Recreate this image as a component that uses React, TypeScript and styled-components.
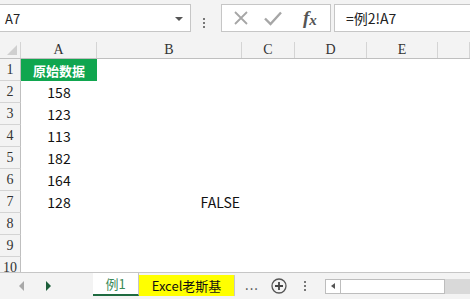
import React, { FC } from "react";
import styled, { createGlobalStyle } from "styled-components";

const GlobalStyle = createGlobalStyle`
  html, body {
    margin: 0;
    padding: 0;
    background: #ffffff;
  }
  * {
    box-sizing: border-box;
  }
`;

const COLS = [21, 76, 145, 53, 72, 71];
const LETTERS = ["A", "B", "C", "D", "E"];

type RowData = { a?: string; b?: string; head?: boolean };

const ROWS: RowData[] = [
  { a: "原始数据", head: true },
  { a: "158" },
  { a: "123" },
  { a: "113" },
  { a: "182" },
  { a: "164" },
  { a: "128", b: "FALSE" },
  {},
  {},
  {},
];

const App: FC = () => {
  return (
    <Page>
      <GlobalStyle />
      <FormulaBar>
        <NameBox>
          <NameText>A7</NameText>
          <Caret />
        </NameBox>
        <DotsSlot $w={30}>
          <VDots />
        </DotsSlot>
        <FxBox>
          <FxButton>
            <svg width="16" height="16" viewBox="0 0 16 16">
              <path d="M2 2 L14 14 M14 2 L2 14" stroke="#a6a6a6" strokeWidth="1.8" fill="none" />
            </svg>
          </FxButton>
          <FxButton>
            <svg width="20" height="16" viewBox="0 0 20 16">
              <path d="M2 8.5 L7.5 14 L18 2.5" stroke="#a6a6a6" strokeWidth="2.4" fill="none" />
            </svg>
          </FxButton>
          <FxLabel>
            f<sub>x</sub>
          </FxLabel>
        </FxBox>
        <FormulaInput>=例2!A7</FormulaInput>
      </FormulaBar>

      <Sheet>
        <HeaderRow>
          <CornerCell>
            <CornerMark />
          </CornerCell>
          {LETTERS.map((l) => (
            <ColHead key={l}>{l}</ColHead>
          ))}
          <ColHead />
        </HeaderRow>
        {ROWS.map((r, i) => (
          <Row key={i}>
            <RowHead>{i + 1}</RowHead>
            <Cell $head={r.head}>{r.a}</Cell>
            <Cell $align="right">{r.b}</Cell>
            <Cell />
            <Cell />
            <Cell />
            <Cell />
          </Row>
        ))}
      </Sheet>

      <TabBar>
        <NavArea>
          <NavArrow $dir="left" $active={false} />
          <NavArrow $dir="right" $active />
        </NavArea>
        <SheetTab $active>例1</SheetTab>
        <SheetTab $yellow>Excel老斯基</SheetTab>
        <MoreDots>...</MoreDots>
        <AddButton>
          <svg width="16" height="16" viewBox="0 0 16 16">
            <circle cx="8" cy="8" r="7" stroke="#555" strokeWidth="1.3" fill="none" />
            <path d="M8 4 V12 M4 8 H12" stroke="#444" strokeWidth="1.8" />
          </svg>
        </AddButton>
        <DotsSlot $w={36}>
          <VDots />
        </DotsSlot>
        <ScrollBox>
          <ScrollBtn>
            <SmallArrow />
          </ScrollBtn>
        </ScrollBox>
        <ScrollTrack />
      </TabBar>
    </Page>
  );
};

export default App;

const Page = styled.div`
  width: 470px;
  height: 299px;
  display: flex;
  flex-direction: column;
  background: #f3f3f3;
  overflow: hidden;
  font-family: "Noto Sans CJK SC", "Liberation Sans", sans-serif;
`;

const FormulaBar = styled.div`
  height: 42px;
  display: flex;
  align-items: flex-start;
  padding-top: 4px;
  flex-shrink: 0;
`;

const NameBox = styled.div`
  width: 191px;
  height: 28px;
  background: #fff;
  border: 1px solid #c6c6c6;
  border-left: none;
  display: flex;
  align-items: center;
  justify-content: space-between;
  padding: 0 7px 0 5px;
`;

const NameText = styled.span`
  font-size: 13px;
  color: #222;
`;

const Caret = styled.span`
  width: 0;
  height: 0;
  border-left: 4px solid transparent;
  border-right: 4px solid transparent;
  border-top: 4px solid #555;
  margin-top: 1px;
`;

const DotsSlot = styled.div<{ $w: number }>`
  width: ${(p) => p.$w}px;
  height: 28px;
  display: flex;
  align-items: center;
  justify-content: center;
  align-self: center;
  flex-shrink: 0;
  padding-right: 4px;
`;

const VDots = styled.span`
  width: 2px;
  height: 12px;
  background: radial-gradient(circle, #777 0.9px, transparent 1.2px) 0 0 / 2px 4px repeat-y;
`;

const FxBox = styled.div`
  width: 110px;
  height: 28px;
  background: #fff;
  border: 1px solid #c6c6c6;
  display: flex;
  align-items: center;
  padding-left: 8px;
  gap: 10px;
`;

const FxButton = styled.span`
  width: 22px;
  display: flex;
  justify-content: center;
  align-items: center;
`;

const FxLabel = styled.span`
  margin-left: 9px;
  font-family: "Liberation Serif", serif;
  font-style: italic;
  font-weight: bold;
  font-size: 19px;
  color: #555;
  line-height: 1;
  sub {
    font-size: 15px;
    vertical-align: -1px;
  }
`;

const FormulaInput = styled.div`
  flex: 1;
  margin-left: 3px;
  height: 28px;
  background: #fff;
  border: 1px solid #c6c6c6;
  border-right: none;
  display: flex;
  align-items: center;
  padding-left: 11px;
  font-size: 14px;
  color: #222;
`;

const Sheet = styled.div`
  flex: 1;
  background: #fff;
  overflow: hidden;
`;

const gridCols = `${COLS.map((c) => `${c}px`).join(" ")} 1fr`;

const HeaderRow = styled.div`
  display: grid;
  grid-template-columns: ${gridCols};
  height: 17px;
  background: #f3f3f3;
  border-bottom: 1px solid #bfbfbf;
`;

const CornerCell = styled.div`
  position: relative;
  border-right: 1px solid #d4d4d4;
`;

const CornerMark = styled.span`
  position: absolute;
  right: 3px;
  bottom: 3px;
  width: 0;
  height: 0;
  border-left: 10px solid transparent;
  border-bottom: 10px solid #cfcfcf;
`;

const ColHead = styled.div`
  border-right: 1px solid #d4d4d4;
  display: flex;
  align-items: center;
  justify-content: center;
  font-family: "Liberation Serif", serif;
  font-size: 14px;
  color: #333;
`;

const Row = styled.div`
  display: grid;
  grid-template-columns: ${gridCols};
  height: 22px;
`;

const RowHead = styled.div`
  background: #f3f3f3;
  border-right: 1px solid #bfbfbf;
  border-bottom: 1px solid #d4d4d4;
  display: flex;
  align-items: center;
  justify-content: center;
  font-family: "Liberation Serif", serif;
  font-size: 14px;
  color: #333;
`;

const Cell = styled.div<{ $head?: boolean; $align?: "center" | "right" }>`
  display: flex;
  align-items: center;
  justify-content: ${(p) => (p.$align === "right" ? "flex-end" : "center")};
  padding-right: ${(p) => (p.$align === "right" ? "2px" : "0")};
  font-size: ${(p) => (p.$head ? "13px" : "14px")};
  font-weight: ${(p) => (p.$head ? "bold" : "normal")};
  color: ${(p) => (p.$head ? "#fff" : "#111")};
  background: ${(p) => (p.$head ? "#10a64f" : "transparent")};
`;

const TabBar = styled.div`
  height: 27px;
  flex-shrink: 0;
  border-top: 1px solid #c6c6c6;
  background: #f3f3f3;
  display: flex;
  align-items: stretch;
`;

const NavArea = styled.div`
  width: 93px;
  display: flex;
  align-items: center;
  padding-left: 19px;
  gap: 22px;
`;

const NavArrow = styled.span<{ $dir: "left" | "right"; $active: boolean }>`
  width: 0;
  height: 0;
  border-top: 5px solid transparent;
  border-bottom: 5px solid transparent;
  ${(p) =>
    p.$dir === "left"
      ? `border-right: 5px solid ${p.$active ? "#1d5e3a" : "#a8a8a8"};`
      : `border-left: 5px solid ${p.$active ? "#1d5e3a" : "#a8a8a8"};`}
`;

const SheetTab = styled.div<{ $active?: boolean; $yellow?: boolean }>`
  margin-bottom: 3px;
  padding: 0 12px;
  display: flex;
  align-items: center;
  justify-content: center;
  font-size: 13px;
  flex-shrink: 0;
  width: ${(p) => (p.$active ? "46px" : "96px")};
  background: ${(p) => (p.$yellow ? "#ffff00" : p.$active ? "#fff" : "transparent")};
  color: ${(p) => (p.$active ? "#3c8a5a" : "#111")};
  border-bottom: ${(p) => (p.$active ? "2px solid #1f6b40" : "none")};
  border-right: 1px solid #c6c6c6;
  margin-top: ${(p) => (p.$yellow ? "2px" : "0")};
`;

const MoreDots = styled.div`
  width: 34px;
  display: flex;
  align-items: center;
  justify-content: center;
  font-size: 13px;
  color: #444;
  letter-spacing: 1px;
  padding-bottom: 4px;
  flex-shrink: 0;
`;

const AddButton = styled.div`
  width: 20px;
  display: flex;
  align-items: center;
  justify-content: center;
  flex-shrink: 0;
`;

const ScrollBox = styled.div`
  width: 120px;
  height: 15px;
  align-self: center;
  background: #fff;
  border: 1px solid #bdbdbd;
  display: flex;
  flex-shrink: 0;
`;

const ScrollBtn = styled.div`
  width: 15px;
  border-right: 1px solid #bdbdbd;
  display: flex;
  align-items: center;
  justify-content: center;
`;

const SmallArrow = styled.span`
  width: 0;
  height: 0;
  border-top: 3px solid transparent;
  border-bottom: 3px solid transparent;
  border-right: 4px solid #555;
`;

const ScrollTrack = styled.div`
  flex: 1;
  height: 15px;
  align-self: center;
  background: #d9d9d9;
`;
